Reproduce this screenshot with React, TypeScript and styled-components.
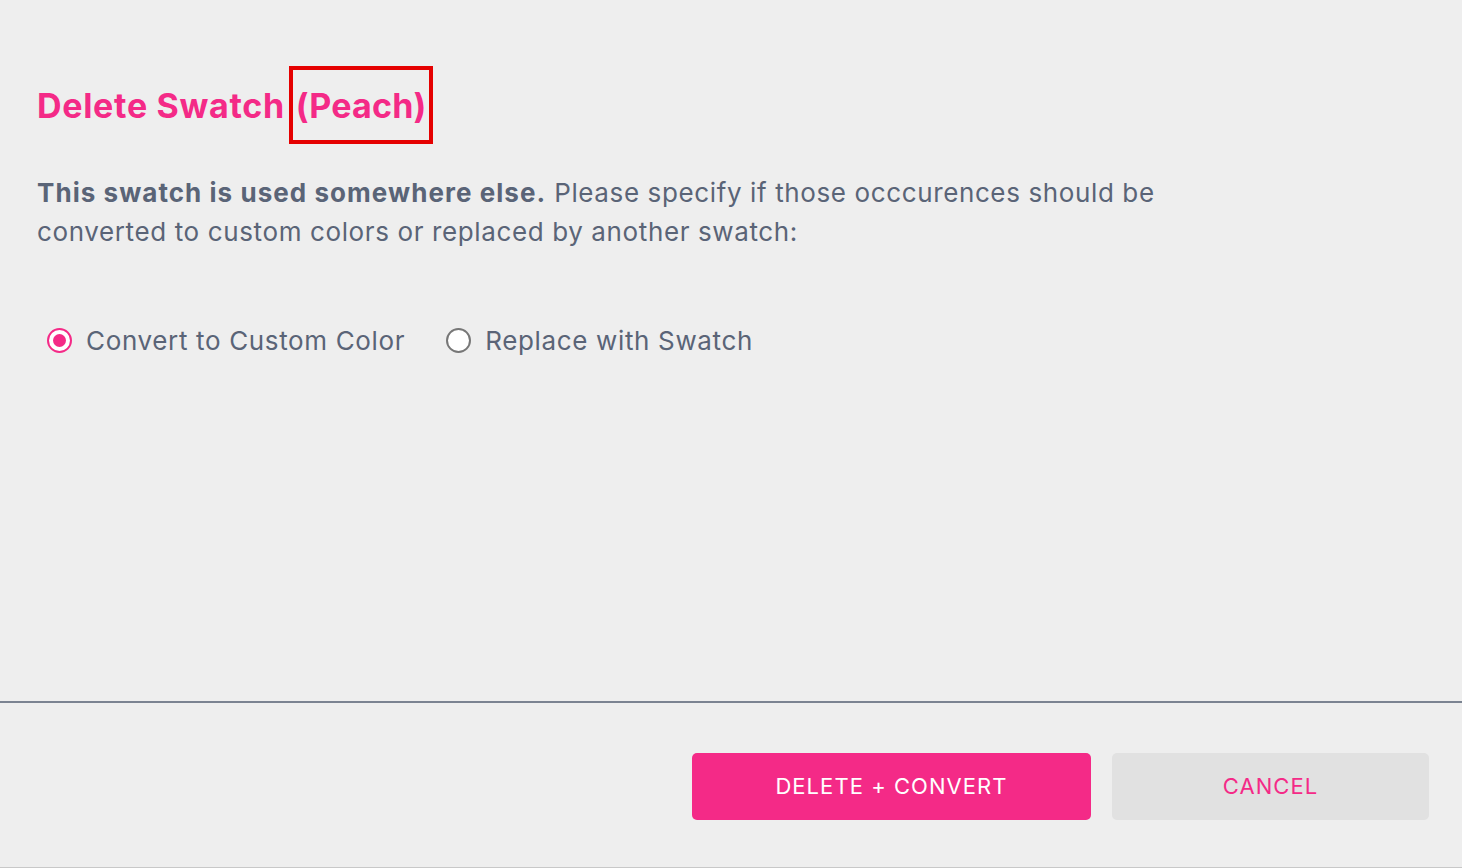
import React, { useState } from "react";
import styled, { createGlobalStyle } from "styled-components";

const Global = createGlobalStyle`
  html, body { margin: 0; padding: 0; background: #eeeeee; }
  body { font-family: Inter, "Noto Sans", "Liberation Sans", sans-serif; }
  * { box-sizing: border-box; }
`;

const Dialog = styled.div`
  height: 868px;
  display: flex;
  flex-direction: column;
  background: #eeeeee;
  border-bottom: 1px solid #c8c8c8;
`;

const Body = styled.div`
  flex: 1;
  padding: 84px 37px 0 37px;
`;

const Title = styled.h1`
  margin: 0;
  font-size: 34px;
  line-height: 44px;
  font-weight: 700;
  color: #f42a87;
  letter-spacing: 0.7px;
`;

const Marked = styled.span`
  outline: 4px solid #e50000;
  outline-offset: 0;
  letter-spacing: 0.2px;
  padding: 15px 2px 14px 3px;
  margin-left: -1px;
`;

const Text = styled.p`
  margin: 45px 0 0 0;
  max-width: 1150px;
  font-size: 26px;
  line-height: 39px;
  letter-spacing: 0.62px;
  color: #5a6477;
  b { font-weight: 700; letter-spacing: 1.05px; }
`;

const Options = styled.div`
  display: flex;
  align-items: center;
  gap: 41px;
  margin-top: 74px;
  padding-left: 10px;
`;

const Option = styled.label`
  display: flex;
  align-items: center;
  gap: 14px;
  font-size: 26px;
  letter-spacing: 0.65px;
  color: #5a6477;
  cursor: pointer;
`;

const Dot = styled.span<{ $on: boolean }>`
  width: 25px;
  height: 25px;
  border-radius: 50%;
  background: #fff;
  border: 2px solid ${(p) => (p.$on ? "#f42a87" : "#777777")};
  display: flex;
  align-items: center;
  justify-content: center;
  &::after {
    content: "";
    width: 13px;
    height: 13px;
    border-radius: 50%;
    background: ${(p) => (p.$on ? "#f42a87" : "transparent")};
  }
`;

const Footer = styled.div`
  height: 166px;
  border-top: 2px solid #7b8391;
  display: flex;
  align-items: center;
  justify-content: flex-end;
  gap: 21px;
  padding: 2px 33px 0 0;
`;

const Button = styled.button<{ $primary?: boolean }>`
  height: 67px;
  width: ${(p) => (p.$primary ? "399px" : "317px")};
  border: none;
  border-radius: 5px;
  font-family: inherit;
  font-size: 22px;
  font-weight: 400;
  letter-spacing: 1.05px;
  background: ${(p) => (p.$primary ? "#f42a87" : "#e1e1e1")};
  color: ${(p) => (p.$primary ? "#ffffff" : "#f42a87")};
  cursor: pointer;
`;

export default function App() {
  const [mode, setMode] = useState("convert");
  return (
    <Dialog>
      <Global />
      <Body>
        <Title>
          Delete Swatch <Marked>(Peach)</Marked>
        </Title>
        <Text>
          <b>This swatch is used somewhere else.</b> Please specify if those occcurences should be
          converted to custom colors or replaced by another swatch:
        </Text>
        <Options>
          <Option onClick={() => setMode("convert")}>
            <Dot $on={mode === "convert"} />
            Convert to Custom Color
          </Option>
          <Option onClick={() => setMode("replace")}>
            <Dot $on={mode === "replace"} />
            Replace with Swatch
          </Option>
        </Options>
      </Body>
      <Footer>
        <Button $primary>DELETE + CONVERT</Button>
        <Button>CANCEL</Button>
      </Footer>
    </Dialog>
  );
}
